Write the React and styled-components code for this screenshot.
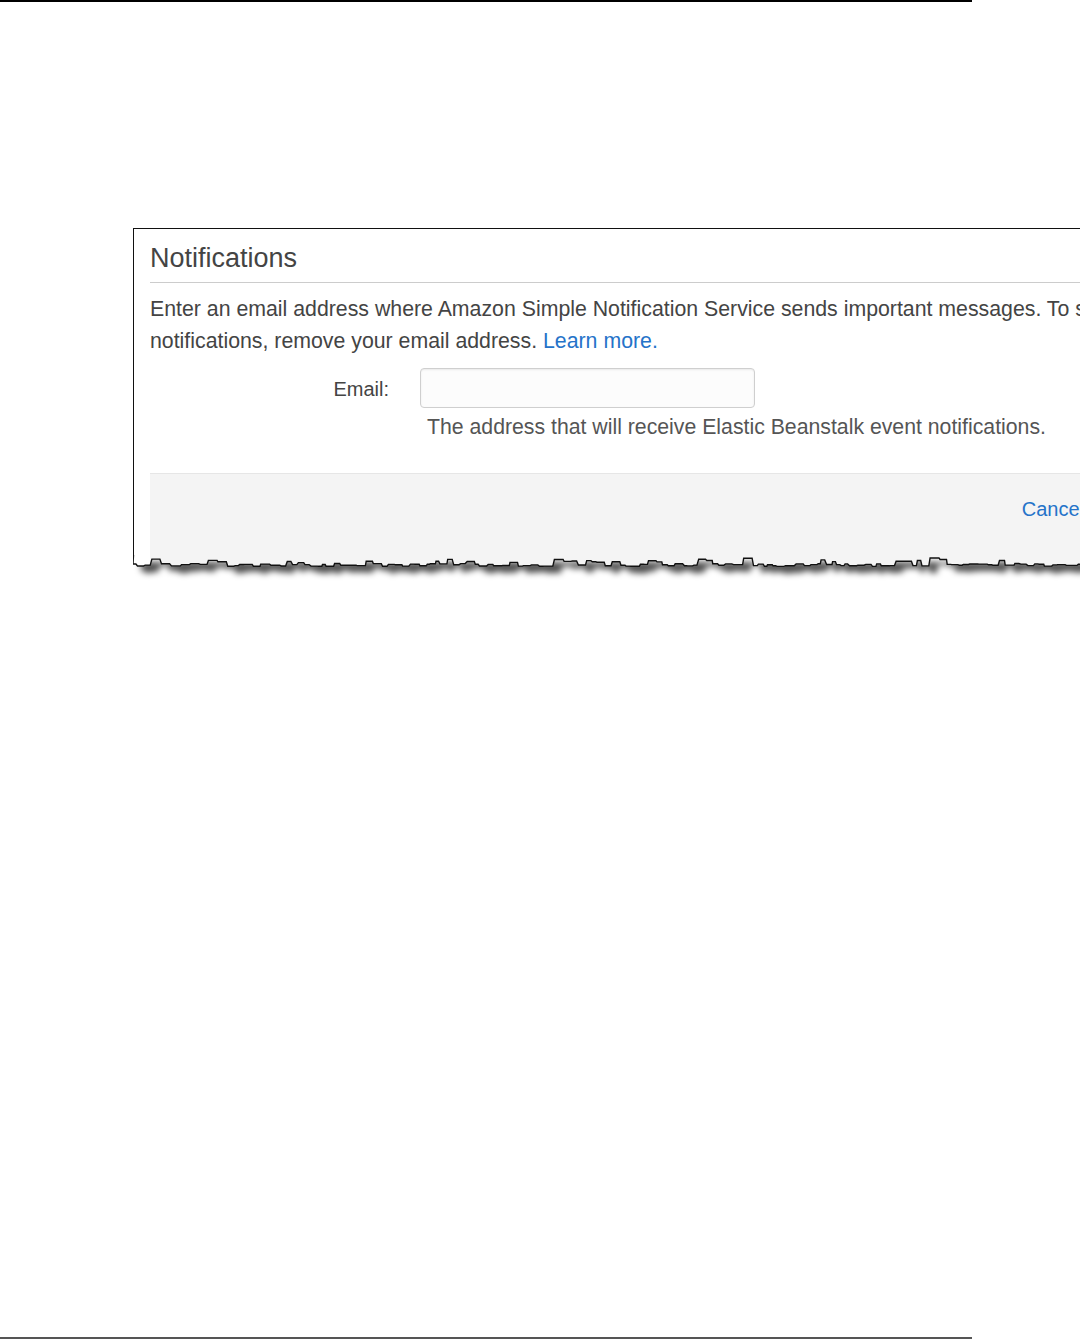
import styled, { createGlobalStyle } from "styled-components";

const FIGURE_WIDTH = 1180;

// torn paper edge, generated once with a fixed seed so it is stable
function tornEdge(width) {
  let seed = 23;
  const rnd = () => {
    seed = (seed * 9301 + 49297) % 233280;
    return seed / 233280;
  };
  let x = 0;
  let y = 9;
  const pts = [[0, 9]];
  while (x < width) {
    x += 2 + rnd() * 7;
    pts.push([Math.min(x, width), y]);
    const bump = rnd() < 0.22 ? 2 + rnd() * 4 : 0;
    y = 10 + (rnd() - 0.5) * 3 - bump;
    x += 0.6 + rnd() * 1.4;
    pts.push([Math.min(x, width), y]);
  }
  const line = pts.map(([px, py]) => `${px.toFixed(1)},${py.toFixed(1)}`).join(" L");
  return {
    area: `M0,0 L${line} L${width},0 Z`,
    stroke: `M0.5,0 L${line}`,
  };
}

const edge = tornEdge(FIGURE_WIDTH);

export default function App() {
  return (
    <>
      <GlobalStyle />
      <Page>
        <TopRule />
        <Figure>
          <Dialog>
            <Heading>Notifications</Heading>
            <Intro>
              Enter an email address where Amazon Simple Notification Service sends important
              messages. To stop receiving notifications, remove your email address.{" "}
              <Link href="#">Learn more.</Link>
            </Intro>
            <FieldRow>
              <Label htmlFor="email">Email:</Label>
              <Input id="email" type="text" />
              <Help>The address that will receive Elastic Beanstalk event notifications.</Help>
            </FieldRow>
            <Footer>
              <Link href="#" $small>
                Cancel
              </Link>
              <SaveButton>Save</SaveButton>
            </Footer>
          </Dialog>
          <Edge width={FIGURE_WIDTH} height="36" viewBox={`0 0 ${FIGURE_WIDTH} 36`}>
            <defs>
              <filter id="tornShadow" x="-5%" y="-100%" width="110%" height="300%">
                <feGaussianBlur stdDeviation="3" />
              </filter>
              <clipPath id="paper">
                <path d={edge.area} />
              </clipPath>
            </defs>
            <g transform="translate(8,7)" filter="url(#tornShadow)">
              <path d={edge.area} fill="#000" opacity="0.7" />
            </g>
            <g clipPath="url(#paper)">
              <rect x="0" y="0" width="17" height="36" fill="#fff" />
              <rect x="17" y="0" width={FIGURE_WIDTH - 17} height="36" fill="#f4f4f4" />
            </g>
            <path d={edge.stroke} fill="none" stroke="#111" strokeWidth="1.4" />
          </Edge>
        </Figure>
        <BottomRule />
      </Page>
    </>
  );
}

const GlobalStyle = createGlobalStyle`
  html, body {
    margin: 0;
    overflow-x: hidden;
    background: #fff;
  }
  body {
    font-family: "Liberation Sans", Arial, sans-serif;
  }
`;

const Page = styled.div`
  display: flex;
  flex-direction: column;
  height: 1339px;
  overflow: hidden;
`;

const TopRule = styled.div`
  width: 972px;
  height: 1.5px;
  background: #000;
`;

const BottomRule = styled.div`
  width: 972px;
  height: 1.5px;
  background: #555;
  margin-top: auto;
  margin-bottom: 0.5px;
`;

const Figure = styled.div`
  margin: 226px 0 0 133px;
  width: ${FIGURE_WIDTH}px;
  display: flex;
  flex-direction: column;
`;

const Dialog = styled.div`
  box-sizing: border-box;
  width: 100%;
  border-top: 1px solid #111;
  border-left: 1px solid #111;
  padding: 0 16px;
  background: #fff;
  color: #444;
`;

const Heading = styled.h2`
  margin: 0;
  padding: 11px 0 6px;
  font-size: 27px;
  line-height: 36px;
  font-weight: normal;
  color: #444;
  border-bottom: 1px solid #ccc;
`;

const Intro = styled.p`
  margin: 10px 0 0;
  font-size: 21.3px;
  line-height: 32px;
`;

const Link = styled.a`
  color: #2573c9;
  text-decoration: none;
  font-size: ${(p) => (p.$small ? "20px" : "inherit")};
  line-height: ${(p) => (p.$small ? "24px" : "inherit")};
`;

const FieldRow = styled.div`
  display: grid;
  grid-template-columns: 239px 335px;
  column-gap: 31px;
  align-items: center;
  margin-top: 11px;
`;

const Label = styled.label`
  text-align: right;
  font-size: 20px;
  color: #444;
  padding-top: 3px;
`;

const Input = styled.input`
  box-sizing: border-box;
  height: 40px;
  width: 100%;
  border: 1px solid #cfcfcf;
  border-radius: 4px;
  background: #fcfcfc;
  box-shadow: inset 0 1px 2px rgba(0, 0, 0, 0.08);
`;

const Help = styled.div`
  grid-column: 2;
  margin: 7px 0 0 7px;
  font-size: 21.25px;
  line-height: 24px;
  color: #555;
  white-space: nowrap;
`;

const Footer = styled.div`
  box-sizing: border-box;
  height: 82px;
  margin-top: 34px;
  padding: 23px 123px 0 16px;
  display: flex;
  justify-content: flex-end;
  align-items: flex-start;
  gap: 20px;
  background: #f4f4f4;
  border-top: 1px solid #e6e6e6;
`;

const SaveButton = styled.button`
  width: 70px;
  height: 32px;
  border: 1px solid #1a5fa8;
  border-radius: 3px;
  background: #2573c9;
  color: #fff;
  font-family: inherit;
  font-size: 18px;
`;

const Edge = styled.svg`
  display: block;
`;
